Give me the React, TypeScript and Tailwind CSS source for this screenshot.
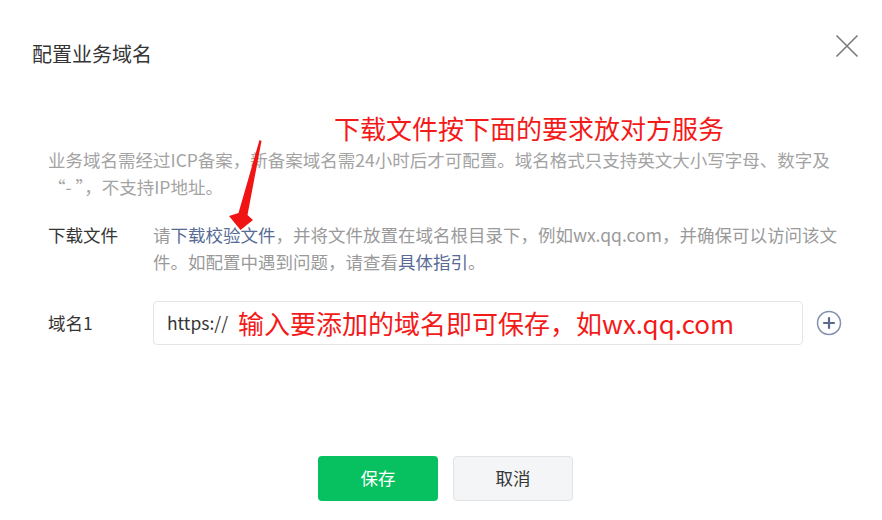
function CloseIcon() {
  return (
    <svg width="24" height="24" viewBox="0 0 24 24" fill="none">
      <path d="M1.5 1.5l21 21M22.5 1.5l-21 21" stroke="#7a7a7a" strokeWidth="1.6" />
    </svg>
  );
}

function PlusCircle() {
  return (
    <svg width="26" height="26" viewBox="0 0 26 26" fill="none">
      <circle cx="13" cy="13" r="11.5" stroke="#8391ad" strokeWidth="1.5" />
      <path d="M13 8v10M8 13h10" stroke="#596a8c" strokeWidth="2.2" strokeLinecap="round" />
    </svg>
  );
}

function Arrow() {
  return (
    <svg className="absolute left-0 top-0 pointer-events-none" width="882" height="520">
      <polygon points="259.5,140 261.5,141 247.5,215 253,220 240.5,230 229,216 238.5,213" fill="#f01414" />
    </svg>
  );
}

function App() {
  return (
    <div
      className="relative w-[882px] h-[520px] bg-white overflow-hidden"
      style={{ fontFamily: '"Noto Sans CJK SC", "Noto Sans", sans-serif' }}
    >
      {/* header */}
      <div className="flex justify-between items-start pl-[32px] pr-[23px] pt-[34px]">
        <h2 className="mt-[6px] h-[28px] leading-[28px] text-[20px] text-[#353535]">配置业务域名</h2>
        <CloseIcon />
      </div>

      <div className="pl-[48px]">
        <p className="mt-[43px] ml-[286px] h-[34px] leading-[34px] text-[26px] text-[#f41a1a] whitespace-nowrap">
          下载文件按下面的要求放对方服务
        </p>

        <p className="mt-[1px] text-[17.5px] leading-[27px] text-[#a3a3a3] whitespace-nowrap">
          业务域名需经过ICP备案，新备案域名需24小时后才可配置。域名格式只支持英文大小写字母、数字及
          <br />
          “- ”，不支持IP地址。
        </p>

        <div className="flex mt-[21px] text-[17.5px] leading-[27px]">
          <div className="w-[105px] shrink-0 text-[#353535]">下载文件</div>
          <p className="text-[#9a9a9a] whitespace-nowrap">
            请<span className="text-[#576b95]">下载校验文件</span>，并将文件放置在域名根目录下，例如wx.qq.com，并确保可以访问该文
            <br />
            件。如配置中遇到问题，请查看<span className="text-[#576b95]">具体指引</span>。
          </p>
        </div>

        <div className="flex items-center mt-[26px]">
          <div className="w-[105px] shrink-0 text-[17.5px] text-[#353535]">域名1</div>
          <div className="flex items-center shrink-0 w-[650px] h-[44px] px-[13px] border border-[#e3e4e6] rounded-[4px]">
            <span className="text-[17.5px] text-[#353535]">https://</span>
            <span className="ml-[10px] text-[26px] leading-[34px] text-[#f41a1a] whitespace-nowrap">
              输入要添加的域名即可保存，如wx.qq.com
            </span>
          </div>
          <div className="ml-[13px] shrink-0">
            <PlusCircle />
          </div>
        </div>
      </div>

      <div className="flex justify-center gap-[15px] pl-[9px] mt-[111px]">
        <button className="w-[120px] h-[45px] rounded-[4px] bg-[#07c160] text-white text-[17.5px]">保存</button>
        <button className="w-[120px] h-[45px] rounded-[4px] bg-[#f4f5f7] border border-[#e2e3e5] text-[#353535] text-[17.5px]">
          取消
        </button>
      </div>

      <Arrow />
    </div>
  );
}

export default App;
